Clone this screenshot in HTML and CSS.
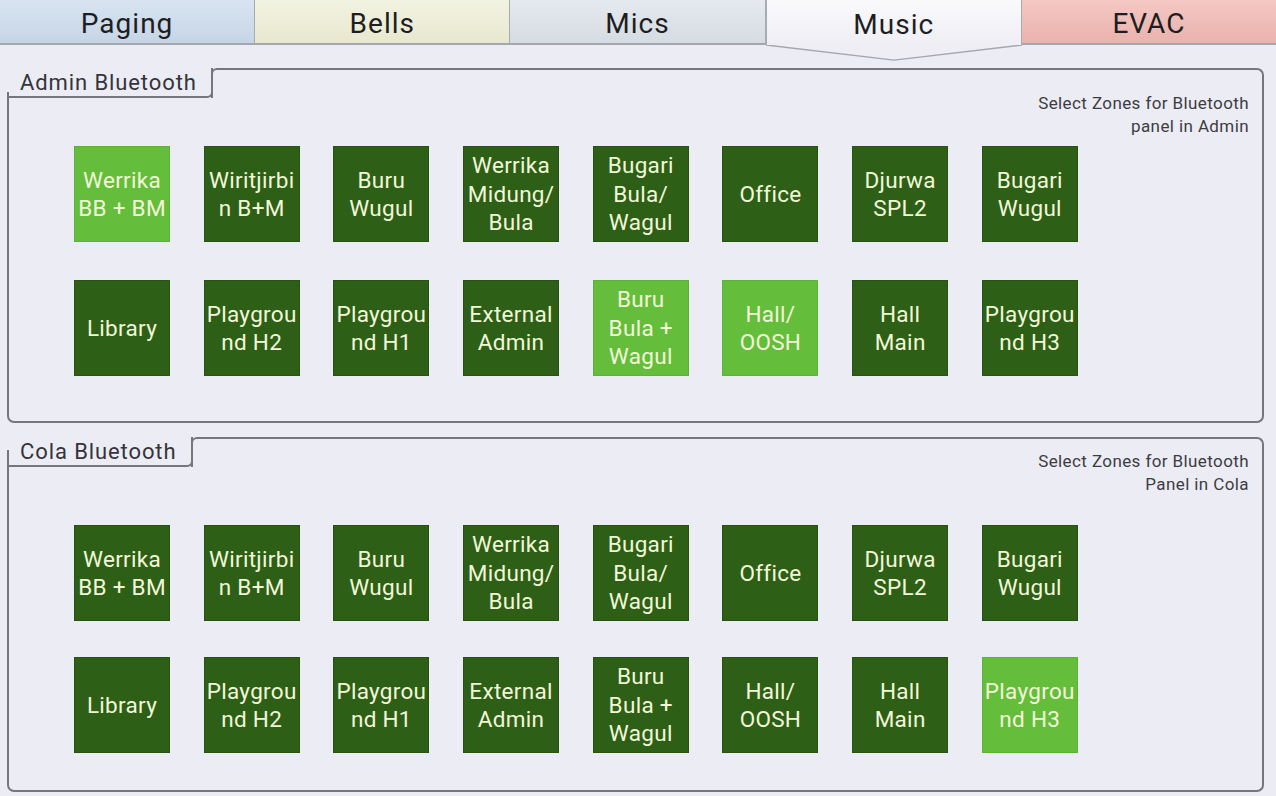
FILE: index.html
```html
<!DOCTYPE html>
<html lang="en">
<head>
<meta charset="utf-8">
<title>Music - Bluetooth Zones</title>
<link rel="stylesheet" href="styles.css">
</head>
<body>
<nav class="tabs">
  <div class="tab tab--paging">Paging</div>
  <div class="tab tab--bells">Bells</div>
  <div class="tab tab--mics">Mics</div>
  <div class="tab tab--music">Music
    <svg class="tab-arrow" viewBox="0 0 256 18" preserveAspectRatio="none" aria-hidden="true">
      <polygon points="0,0 128,16 256,0" fill="#eeeef4"/>
      <polyline points="0,0 128,16 256,0" fill="none" stroke="#a4a6ac" stroke-width="1.5"/>
    </svg>
  </div>
  <div class="tab tab--evac">EVAC</div>
</nav>

<main class="content">
  <section class="group group--admin">
    <div class="group-head">
      <div class="group-label">Admin Bluetooth</div>
      <div class="group-fill"></div>
    </div>
    <div class="group-body">
      <p class="note">Select Zones for Bluetooth<br>panel in Admin</p>
      <div class="zones">
        <button class="zone zone--on">Werrika BB + BM</button>
        <button class="zone">Wiritjirbin B+M</button>
        <button class="zone">Buru Wugul</button>
        <button class="zone">Werrika Midung/ Bula</button>
        <button class="zone">Bugari Bula/ Wagul</button>
        <button class="zone">Office</button>
        <button class="zone">Djurwa SPL2</button>
        <button class="zone">Bugari Wugul</button>
        <button class="zone">Library</button>
        <button class="zone">Playground H2</button>
        <button class="zone">Playground H1</button>
        <button class="zone">External Admin</button>
        <button class="zone zone--on">Buru Bula + Wagul</button>
        <button class="zone zone--on">Hall/ OOSH</button>
        <button class="zone">Hall Main</button>
        <button class="zone">Playground H3</button>
      </div>
    </div>
  </section>

  <section class="group group--cola">
    <div class="group-head">
      <div class="group-label">Cola Bluetooth</div>
      <div class="group-fill"></div>
    </div>
    <div class="group-body">
      <p class="note">Select Zones for Bluetooth<br>Panel in Cola</p>
      <div class="zones">
        <button class="zone">Werrika BB + BM</button>
        <button class="zone">Wiritjirbin B+M</button>
        <button class="zone">Buru Wugul</button>
        <button class="zone">Werrika Midung/ Bula</button>
        <button class="zone">Bugari Bula/ Wagul</button>
        <button class="zone">Office</button>
        <button class="zone">Djurwa SPL2</button>
        <button class="zone">Bugari Wugul</button>
        <button class="zone">Library</button>
        <button class="zone">Playground H2</button>
        <button class="zone">Playground H1</button>
        <button class="zone">External Admin</button>
        <button class="zone">Buru Bula + Wagul</button>
        <button class="zone">Hall/ OOSH</button>
        <button class="zone">Hall Main</button>
        <button class="zone zone--on">Playground H3</button>
      </div>
    </div>
  </section>
</main>
</body>
</html>
```

FILE: styles.css
```css
* { box-sizing: border-box; }

html, body {
  margin: 0;
  height: 100%;
}

body {
  background: #ececf4;
  font-family: Roboto, "Liberation Sans", Arial, sans-serif;
  color: #2a2a2e;
  overflow: hidden;
}

/* ---- top tab strip ---- */
.tabs {
  display: flex;
  height: 45px;
}

.tab {
  position: relative;
  flex: 1 1 0;
  display: flex;
  align-items: center;
  justify-content: center;
  padding-top: 3px;
  font-size: 28px;
  letter-spacing: 1px;
  color: #1e1e22;
  border-right: 1px solid #a8abb0;
  border-bottom: 2px solid #a4a7ad;
}

.tab:last-child { border-right: 0; }

.tab--paging { background: linear-gradient(#d8e4f1, #c6d5e5); }
.tab--bells  { background: linear-gradient(#f2f2e2, #e8e8d0); }
.tab--mics   { background: linear-gradient(#e6eaef, #d5dbe2); }
.tab--evac   { background: linear-gradient(#f4c8c4, #e9b2ad); }

.tab--music {
  background: linear-gradient(#fafafd, #eeeef4);
  border-bottom: 0;
  border-left: 1px solid #a8abb0;
  z-index: 1;
}

.tab-arrow {
  position: absolute;
  left: -1px;
  right: -1px;
  top: 45px;
  width: calc(100% + 2px);
  height: 17px;
  display: block;
}

/* ---- group boxes ---- */
.content {
  display: flex;
  flex-direction: column;
  gap: 14px;
  padding: 23px 12px 0 7px;
}

.group-head {
  display: flex;
  height: 30px;
}

.group-label {
  width: 206px;
  padding: 2px 0 0 13px;
  font-size: 22px;
  letter-spacing: 0.9px;
  line-height: 26px;
  color: #34343a;
  border-bottom: 2px solid #76767e;
  border-right: 2px solid #76767e;
  border-bottom-right-radius: 6px;
}

.group--cola .group-label { width: 186px; }

.group-fill {
  flex: 1;
  margin-left: -2px;
  border-top: 2px solid #76767e;
  border-left: 2px solid #76767e;
  border-right: 2px solid #76767e;
  border-top-left-radius: 6px;
  border-top-right-radius: 7px;
}

.group-body {
  border: 2px solid #76767e;
  border-top: 0;
  border-radius: 0 0 7px 7px;
  padding-bottom: 45px;
}

.group--cola .group-body { padding-bottom: 37px; }

.note {
  margin: -6px 0 0;
  padding-right: 13px;
  text-align: right;
  font-size: 17px;
  letter-spacing: 0.4px;
  line-height: 23px;
  color: #3c3c42;
}

.group--cola .note { margin-top: -17px; }

/* ---- zone buttons ---- */
.zones {
  display: grid;
  grid-template-columns: repeat(8, 96px);
  column-gap: 33.7px;
  row-gap: 38px;
  margin-top: 8px;
  padding-left: 65px;
}

.group--cola .zones {
  margin-top: 29px;
  row-gap: 36px;
}

.zone {
  width: 96px;
  height: 96px;
  padding: 0;
  border: 1px solid #285212;
  background: #2d5f16;
  color: #f2f8d8;
  font-family: Roboto, "Liberation Sans", Arial, sans-serif;
  font-size: 22.5px;
  font-weight: 400;
  letter-spacing: 0.3px;
  line-height: 28.5px;
  text-align: center;
  overflow-wrap: anywhere;
  cursor: pointer;
}

.zone--on {
  background: #64bd3b;
  border-color: #5cb236;
}
```
